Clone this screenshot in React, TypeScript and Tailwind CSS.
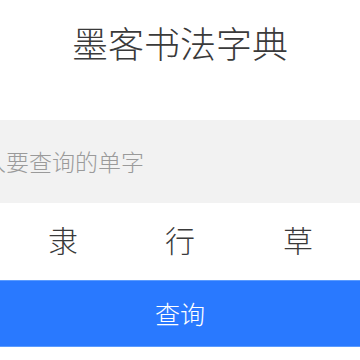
import React from "react";

export default function App() {
  const font = { fontFamily: '"Noto Sans CJK SC", "Noto Sans", sans-serif' };
  return (
    <div className="w-[360px] h-[360px] bg-white overflow-hidden font-light" style={font}>
      <div className="h-[84px] flex items-center justify-center text-[36px] leading-none text-[#3a3a3a] mb-[36px]">
        墨客书法字典
      </div>
      <div className="h-[83px] bg-[#f2f2f2] overflow-hidden flex items-center">
        <input
          className="-ml-[63px] w-[calc(100%+63px)] bg-transparent outline-none text-[23px] font-light text-[#333] placeholder:text-[#9a9a9a]"
          placeholder="请输入要查询的单字"
        />
      </div>
      <div className="h-[77px] flex items-center text-[30px] text-[#3a3a3a] leading-none pb-[6px]">
        <div className="w-[125px] pl-[48px]">隶</div>
        <div className="w-[118px] text-left pl-[40px]">行</div>
        <div className="flex-1 pl-[40px]">草</div>
      </div>
      <button className="w-full h-[67px] bg-[#2979ff] border-y border-[#5a9bff] text-white text-[25px] font-light flex items-center justify-center">
        查询
      </button>
    </div>
  );
}
